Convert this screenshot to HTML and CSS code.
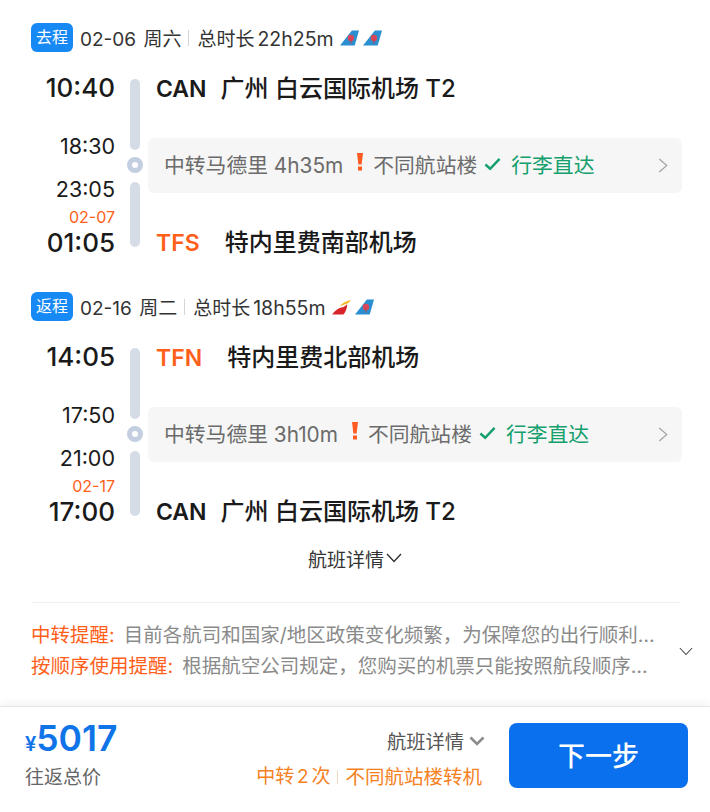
FILE: index.html
```html
<!DOCTYPE html>
<html lang="zh-CN">
<head>
	<meta charset="UTF-8">
	<title>航班详情</title>
	<link rel="stylesheet" href="styles.css">
</head>
<body>
	<svg class="defs" width="0" height="0">
		<symbol id="cz" viewBox="0 0 20 16">
			<path d="M0 16 L12.5 0 H20 L15.5 16 Z" fill="#2a8fd0"/>
			<circle cx="11.5" cy="8" r="3.4" fill="#d8485a"/>
			<path d="M11 8 H12 V14 H11 Z" fill="#c93a4c"/>
		</symbol>
		<symbol id="ib" viewBox="0 0 20 16">
			<path d="M0 16 C4 11 7 9 10 8.5 C13 8 15 6 16 5 C16 9 14 14 12 16 Z" fill="#d8232a"/>
			<path d="M8 7 C11 3.5 15 1.5 20 0.5 C19 2.5 17 4 14 5 C12 5.8 10 6.5 8 7 Z" fill="#f6b51e"/>
		</symbol>
		<symbol id="warn" viewBox="0 0 10 18">
			<path d="M2 0 H8 L6.6 11.5 H3.4 Z" fill="#ff5a1f"/>
			<rect x="3" y="13.5" width="4" height="4" fill="#ff5a1f"/>
		</symbol>
	</svg>

	<main class="content">
		<section class="trip">
			<div class="trip-head">
				<span class="tag">去程</span>
				<span class="date">02-06 周六</span>
				<span class="sep"></span>
				<span class="total">总时长<span class="dur">22h25m</span></span>
				<svg class="logo"><use href="#cz"/></svg>
				<svg class="logo"><use href="#cz"/></svg>
			</div>
			<div class="route">
				<div class="times">
					<div class="t t-main">10:40</div>
					<div class="t t-sub t-arrive">18:30</div>
					<div class="t t-sub t-leave">23:05</div>
					<div class="next-day">02-07</div>
					<div class="t t-main t-last">01:05</div>
				</div>
				<div class="axis">
					<span class="seg seg-top"></span>
					<span class="dot"></span>
					<span class="seg seg-bottom"></span>
				</div>
				<div class="places">
					<div class="place"><b class="code">CAN</b><span>广州 白云国际机场 T2</span></div>
					<div class="transfer">
						<span>中转马德里 4h35m</span>
						<svg class="warn"><use href="#warn"/></svg>
						<span>不同航站楼</span>
						<svg class="check" viewBox="0 0 18 14"><path d="M1.5 7.5 L6.5 12 L16.5 1.5" fill="none" stroke="#14a06c" stroke-width="2.6"/></svg>
						<span class="green">行李直达</span>
						<svg class="arrow" viewBox="0 0 10 16"><path d="M1 1 L9 8 L1 15" fill="none" stroke="#a3a3a3" stroke-width="1.3"/></svg>
					</div>
					<div class="place"><b class="code orange">TFS</b><span>特内里费南部机场</span></div>
				</div>
			</div>
		</section>

		<section class="trip">
			<div class="trip-head">
				<span class="tag">返程</span>
				<span class="date">02-16 周二</span>
				<span class="sep"></span>
				<span class="total">总时长<span class="dur">18h55m</span></span>
				<svg class="logo"><use href="#ib"/></svg>
				<svg class="logo"><use href="#cz"/></svg>
			</div>
			<div class="route">
				<div class="times">
					<div class="t t-main">14:05</div>
					<div class="t t-sub t-arrive">17:50</div>
					<div class="t t-sub t-leave">21:00</div>
					<div class="next-day">02-17</div>
					<div class="t t-main t-last">17:00</div>
				</div>
				<div class="axis">
					<span class="seg seg-top"></span>
					<span class="dot"></span>
					<span class="seg seg-bottom"></span>
				</div>
				<div class="places">
					<div class="place"><b class="code orange">TFN</b><span>特内里费北部机场</span></div>
					<div class="transfer">
						<span>中转马德里 3h10m</span>
						<svg class="warn"><use href="#warn"/></svg>
						<span>不同航站楼</span>
						<svg class="check" viewBox="0 0 18 14"><path d="M1.5 7.5 L6.5 12 L16.5 1.5" fill="none" stroke="#14a06c" stroke-width="2.6"/></svg>
						<span class="green">行李直达</span>
						<svg class="arrow" viewBox="0 0 10 16"><path d="M1 1 L9 8 L1 15" fill="none" stroke="#a3a3a3" stroke-width="1.3"/></svg>
					</div>
					<div class="place"><b class="code">CAN</b><span>广州 白云国际机场 T2</span></div>
				</div>
			</div>
		</section>

		<div class="more">航班详情<svg class="more-arrow" viewBox="0 0 16 10"><path d="M1 1 L8 8.5 L15 1" fill="none" stroke="#333" stroke-width="1.4"/></svg></div>

		<div class="notes">
			<div class="note-list">
				<p class="note"><span class="orange note-label">中转提醒:</span>目前各航司和国家/地区政策变化频繁&#xFF0C;为保障您的出行顺利…</p>
				<p class="note"><span class="orange note-label">按顺序使用提醒:</span>根据航空公司规定&#xFF0C;您购买的机票只能按照航段顺序…</p>
			</div>
			<svg class="note-arrow" viewBox="0 0 16 10"><path d="M1 1 L8 8.5 L15 1" fill="none" stroke="#444" stroke-width="1.2"/></svg>
		</div>
	</main>

	<footer class="bar">
		<div class="price-box">
			<div class="price"><span class="yen">¥</span>5017</div>
			<div class="price-label">往返总价</div>
		</div>
		<div class="summary">
			<div class="summary-link">航班详情<svg class="summary-arrow" viewBox="0 0 16 10"><path d="M1.5 1.5 L8 8 L14.5 1.5" fill="none" stroke="#8c8c8c" stroke-width="2.6"/></svg></div>
			<div class="summary-tips"><span class="tip-count">中转 2 次</span><span class="tip-sep"></span><span>不同航站楼转机</span></div>
		</div>
		<button class="next">下一步</button>
	</footer>
</body>
</html>
```

FILE: styles.css
```css
* {
	margin: 0;
	padding: 0;
	box-sizing: border-box;
}
html, body {
	height: 812px;
	overflow: hidden;
}
body {
	display: flex;
	flex-direction: column;
	background-color: #fff;
	color: #1a1a1a;
	font-family: Inter, "Noto Sans CJK SC", sans-serif;
}
.defs {
	position: absolute;
}
.orange {
	color: #ff5f1a;
}
.green {
	color: #14a06c;
}

.content {
	flex: 1;
	padding: 23px 28px 0 31px;
}
.trip {
	margin-bottom: 38px;
}
.trip:last-of-type {
	margin-bottom: 23px;
}
.trip-head {
	display: flex;
	align-items: center;
	height: 29px;
	color: #333;
	font-size: 19px;
}
.tag {
	width: 42px;
	height: 29px;
	line-height: 29px;
	margin-right: 7px;
	text-align: center;
	font-size: 16px;
	color: #fff;
	background-color: #1689f5;
	border-radius: 6px;
}
.date {
	word-spacing: 2px;
}
.sep {
	width: 1px;
	height: 16px;
	margin: 0 8px 0 7px;
	background-color: #d5d5d5;
}
.dur {
	margin-left: 3px;
	font-size: 19.5px;
}
.logo {
	width: 19px;
	height: 16px;
	margin-left: 4px;
}
.total {
	margin-right: 2px;
}

.route {
	display: flex;
	height: 178px;
	margin-top: 24px;
}
.times {
	width: 84px;
	text-align: right;
}
.t {
	line-height: 24px;
}
.t-main {
	font-size: 26px;
	font-weight: 500;
}
.t-sub {
	font-size: 21.5px;
}
.t-arrive {
	margin-top: 34px;
}
.t-leave {
	margin-top: 19px;
}
.next-day {
	margin-top: 8px;
	line-height: 16px;
	font-size: 16px;
	color: #ff5f1a;
}
.t-last {
	margin-top: 6px;
}
.axis {
	display: flex;
	flex-direction: column;
	align-items: center;
	width: 40px;
	padding-top: 3px;
}
.seg {
	width: 10px;
	background-color: #d6dce6;
	border-radius: 5px;
}
.seg-top {
	height: 71px;
}
.seg-bottom {
	height: 65px;
}
.dot {
	width: 16px;
	height: 16px;
	margin: 7px 0 9px;
	border: 5px solid #c3cee0;
	border-radius: 50%;
}
.places {
	flex: 1;
	padding-left: 1px;
}
.place {
	display: flex;
	height: 24px;
	line-height: 26px;
	font-size: 24px;
	font-weight: 500;
}
.code {
	margin-right: 14px;
	font-size: 23px;
	font-weight: 600;
}
.code.orange {
	margin-right: 25px;
}
.transfer {
	display: flex;
	align-items: center;
	height: 55px;
	margin: 38px 0 37px -8px;
	padding: 0 14px 4px 16px;
	font-size: 20.8px;
	color: #6b6b6b;
	background-color: #f6f6f6;
	border-radius: 6px;
}
.warn {
	width: 10px;
	height: 18px;
	margin: -4px 8px 0 12px;
}
.check {
	width: 17px;
	height: 14px;
	margin: 0 10px 0 7px;
}
.arrow {
	width: 10px;
	height: 15px;
	margin: 4px 0 0 auto;
}

.more {
	display: flex;
	align-items: center;
	justify-content: center;
	height: 24px;
	padding-right: 3px;
	font-size: 19px;
	color: #333;
}
.more-arrow {
	width: 16px;
	height: 10px;
	margin-left: 2px;
}
.notes {
	display: flex;
	align-items: center;
	margin: 32px 2px 0 0;
	padding-top: 17px;
	border-top: 1px solid #f1f1f1;
}
.note-list {
	flex: 1;
}
.note {
	line-height: 31px;
	font-size: 19.5px;
	color: #8a8a8a;
	white-space: nowrap;
}
.note-label {
	margin-right: 9px;
}
.note-arrow {
	width: 14px;
	height: 9px;
	margin-right: -13px;
}

.bar {
	display: flex;
	height: 106px;
	padding: 16px 22px 0 25px;
	background-color: #fff;
	border-top: 1px solid #e8e8e8;
	box-shadow: 0 -3px 8px rgba(0, 0, 0, 0.05);
}
.price-box {
	width: 190px;
}
.price {
	height: 32px;
	line-height: 32px;
	font-size: 35.5px;
	font-weight: 600;
	color: #0f74e8;
}
.yen {
	font-size: 20px;
}
.price-label {
	margin-top: 11px;
	line-height: 24px;
	font-size: 19px;
	color: #666;
}
.summary {
	flex: 1;
	display: flex;
	flex-direction: column;
	align-items: flex-end;
	padding-right: 24px;
}
.summary-link {
	display: flex;
	align-items: center;
	height: 24px;
	margin-top: 6px;
	font-size: 19.3px;
	color: #555;
}
.summary-arrow {
	width: 16px;
	height: 10px;
	margin-left: 5px;
}
.summary-tips {
	display: flex;
	align-items: center;
	margin-top: 12px;
	margin-right: 3px;
	line-height: 24px;
	font-size: 19.5px;
	color: #f5821f;
}
.tip-count {
	font-size: 19px;
	word-spacing: -2.5px;
}
.tip-sep {
	width: 1px;
	height: 14px;
	margin: 0 7px;
	background-color: #f3d9bf;
}
.next {
	width: 179px;
	height: 65px;
	padding-bottom: 3px;
	font-family: inherit;
	font-size: 27px;
	font-weight: 500;
	color: #fff;
	background-color: #0a70ee;
	border: 0;
	border-radius: 8px;
}
```
